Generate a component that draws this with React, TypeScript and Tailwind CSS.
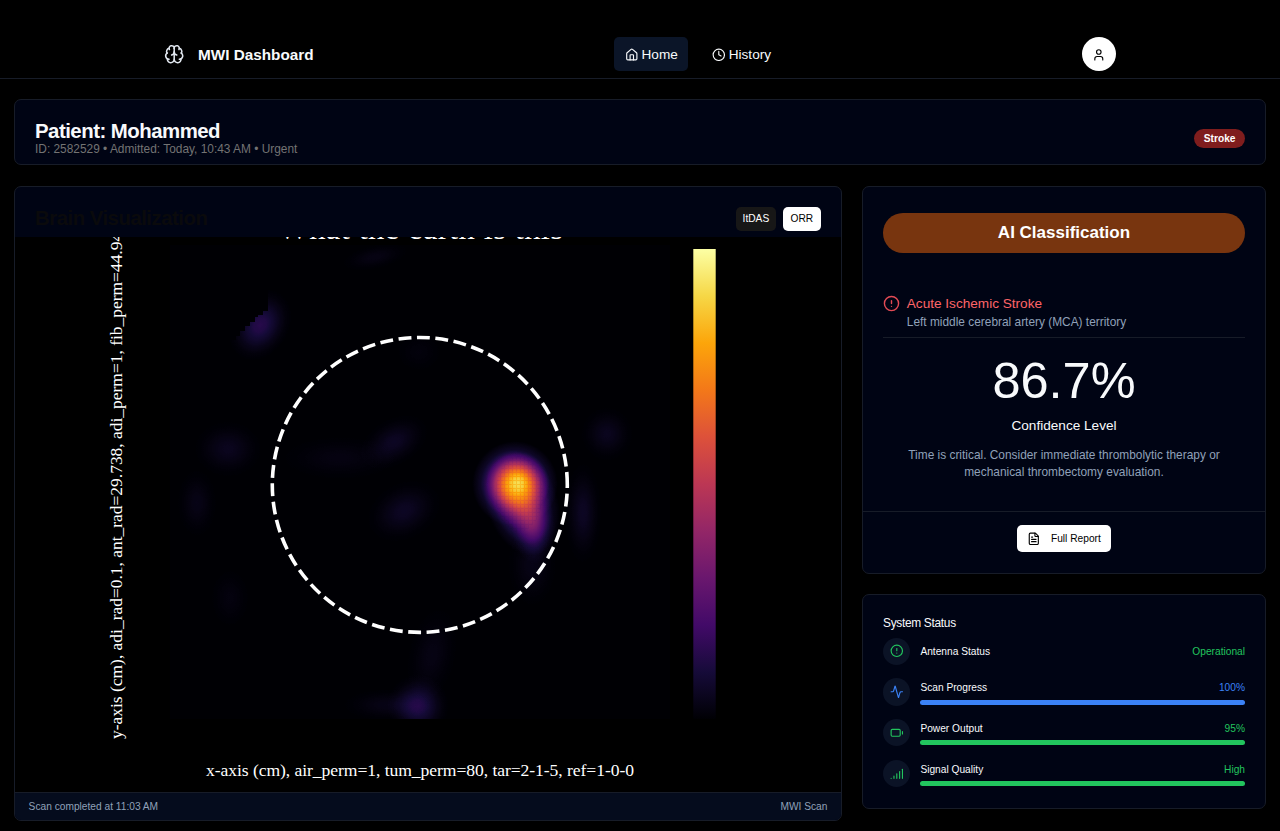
import type { ReactNode } from "react";
import {
  Activity,
  Battery,
  Brain,
  CircleAlert,
  Clock,
  FileText,
  House,
  Signal,
  User,
} from "lucide-react";

const INFERNO = [
  "#000004", "#160b39", "#420a68", "#6a176e", "#932667", "#bc3754",
  "#dd513a", "#f37819", "#fca50a", "#f6d746", "#fcffa4",
];

const channel = (start: number) =>
  INFERNO.map((c) => (parseInt(c.slice(start, start + 2), 16) / 255).toFixed(3)).join(" ");

type Spot = { x: number; y: number; rx: number; ry: number; level: number; turn?: number };

const SPOTS: Spot[] = [
  { x: 260, y: 325, rx: 29, ry: 38, level: 0.14, turn: 32 },
  { x: 375, y: 257, rx: 36, ry: 13, level: 0.03, turn: -12 },
  { x: 394, y: 442, rx: 38, ry: 24, level: 0.06, turn: -30 },
  { x: 340, y: 458, rx: 64, ry: 24, level: 0.025 },
  { x: 404, y: 511, rx: 40, ry: 29, level: 0.06, turn: -28 },
  { x: 228, y: 449, rx: 35, ry: 29, level: 0.05 },
  { x: 607, y: 434, rx: 27, ry: 28, level: 0.05 },
  { x: 583, y: 513, rx: 19, ry: 52, level: 0.06 },
  { x: 197, y: 503, rx: 21, ry: 36, level: 0.035 },
  { x: 230, y: 598, rx: 22, ry: 33, level: 0.02 },
  { x: 419, y: 352, rx: 26, ry: 22, level: 0.015 },
  { x: 432, y: 655, rx: 26, ry: 52, level: 0.03, turn: 12 },
  { x: 418, y: 706, rx: 31, ry: 32, level: 0.13 },
  { x: 388, y: 705, rx: 48, ry: 17, level: 0.035 },
  { x: 532, y: 565, rx: 26, ry: 44, level: 0.035 },
  { x: 515, y: 484, rx: 43, ry: 43, level: 0.64 },
  { x: 518, y: 483, rx: 32, ry: 31, level: 0.56 },
  { x: 518, y: 483, rx: 13, ry: 14, level: 0.36 },
  { x: 522, y: 503, rx: 36, ry: 54, level: 0.44, turn: -18 },
  { x: 533, y: 524, rx: 22, ry: 40, level: 0.2, turn: -4 },
];

function ScanPlot() {
  return (
    <svg viewBox="15 237 826 555" className="block h-[555px] w-full bg-black">
      <defs>
        <radialGradient id="falloff">
          <stop offset="0" stopColor="#fff" stopOpacity="1" />
          <stop offset=".2" stopColor="#fff" stopOpacity=".88" />
          <stop offset=".4" stopColor="#fff" stopOpacity=".6" />
          <stop offset=".6" stopColor="#fff" stopOpacity=".31" />
          <stop offset=".8" stopColor="#fff" stopOpacity=".1" />
          <stop offset="1" stopColor="#fff" stopOpacity="0" />
        </radialGradient>
        <linearGradient id="scale" x1="0" y1="1" x2="0" y2="0">
          {INFERNO.map((c, i) => (
            <stop key={c} offset={i / 10} stopColor={c} />
          ))}
        </linearGradient>
        <filter id="inferno" filterUnits="userSpaceOnUse" x="170" y="245" width="500" height="474" colorInterpolationFilters="sRGB">
          <feComponentTransfer>
            <feFuncR type="table" tableValues={channel(1)} />
            <feFuncG type="table" tableValues={channel(3)} />
            <feFuncB type="table" tableValues={channel(5)} />
          </feComponentTransfer>
        </filter>
        <pattern id="mesh" width="4" height="4" patternUnits="userSpaceOnUse">
          <path d="M0 .5H4M.5 0V4" stroke="#000" strokeWidth="1" opacity=".06" />
        </pattern>
      </defs>
      <g filter="url(#inferno)">
        <rect x="170" y="245" width="500" height="474" fill="#000" />
        {SPOTS.map((s, i) => (
          <ellipse
            key={i}
            cx={s.x}
            cy={s.y}
            rx={s.rx}
            ry={s.ry}
            fill="url(#falloff)"
            opacity={s.level}
            transform={`rotate(${s.turn ?? 0} ${s.x} ${s.y})`}
          />
        ))}
        <ellipse cx="519" cy="494" rx="24" ry="38" fill="url(#mesh)" />
        <path d="M225 280H268V306H268V311H263V315H258V317H255V322H250V326H245V331H240V336H236V340H225Z" fill="#000" />
      </g>
      <path
        d="M567.3 484.9A147.5 147.5 0 0 0 272.3 484.9A147.5 147.5 0 0 0 567.3 484.9"
        fill="none"
        stroke="#fff"
        strokeWidth="3.6"
        strokeDasharray="12.9 5.56"
      />
      <rect x="693.3" y="249" width="22.4" height="470" fill="url(#scale)" />
      <g fill="#fff" fontFamily="'Liberation Serif', serif">
        <text x="278" y="238.6" fontSize="32.6" textLength="285">What the earth is this</text>
        <text x="206" y="776" fontSize="17.6" textLength="428">
          x-axis (cm), air_perm=1, tum_perm=80, tar=2-1-5, ref=1-0-0
        </text>
        <text transform="translate(122 739) rotate(-90)" fontSize="17.45">
          y-axis (cm), adi_rad=0.1, ant_rad=29.738, adi_perm=1, fib_perm=44.94
        </text>
      </g>
    </svg>
  );
}

function StatusRow({ icon, label, value, tone, bar }: {
  icon: ReactNode;
  label: string;
  value: string;
  tone: string;
  bar?: string;
}) {
  return (
    <div className="flex h-[27.2px] items-center gap-[10.2px]">
      <div className={`flex size-[27.2px] shrink-0 items-center justify-center rounded-full bg-[#0b1326] ${tone}`}>
        {icon}
      </div>
      <div className="flex-1">
        <div className="flex justify-between text-[10.2px] leading-[17px]">
          <span className="text-slate-50">{label}</span>
          <span className={tone}>{value}</span>
        </div>
        {bar && <div className={`mt-[3.4px] h-[5.1px] rounded-full ${bar}`} />}
      </div>
    </div>
  );
}

export default function App() {
  return (
    <div className="h-[831px] overflow-hidden bg-black font-['Liberation_Sans',Arial,sans-serif] text-slate-50">
      <header className="h-[79px] border-b border-[#171c28] pt-[30.4px]">
        <div className="mx-auto flex h-12 w-[952px] items-center justify-between">
          <div className="flex items-center gap-[13.6px]">
            <Brain size={20.4} strokeWidth={1.8} className="text-slate-200" />
            <span className="pt-0.5 text-[15.3px] leading-5 font-bold">MWI Dashboard</span>
          </div>
          <nav className="flex gap-[13.6px] text-[13.6px] leading-5">
            <span className="flex h-[34px] items-center gap-[3.4px] rounded-[5px] bg-[#0b1528] px-[10.2px]">
              <House size={13.6} />
              <span className="pt-px">Home</span>
            </span>
            <span className="flex h-[34px] items-center gap-[3.4px] px-[10.2px]">
              <Clock size={13.6} />
              <span className="pt-px">History</span>
            </span>
          </nav>
          <div className="flex size-[34px] items-center justify-center rounded-full bg-white text-black">
            <User size={13.6} />
          </div>
        </div>
      </header>

      <main className="px-3.5 pt-5">
        <section className="flex h-[66px] items-center justify-between rounded-[7px] border border-[#171c28] bg-[#000414] px-5">
          <div className="pt-[15px]">
            <h1 className="text-[20.4px] leading-[20.4px] font-bold tracking-tight">Patient: Mohammed</h1>
            <p className="text-[11.9px] leading-[17px] text-[#737373]">
              ID: 2582529 • Admitted: Today, 10:43 AM • Urgent
            </p>
          </div>
          <span className="mt-[13px] rounded-full bg-[#7f1d1d] px-[9.5px] py-[2.7px] text-[10.2px] leading-[13.6px] font-bold text-white">
            Stroke
          </span>
        </section>

        <div className="mt-[21px] flex items-start gap-5">
          <section className="flex h-[635px] w-[828px] flex-col overflow-hidden rounded-[7px] border border-[#171c28] bg-[#000414]">
            <div className="flex h-[50px] shrink-0 items-center justify-between px-5 pt-[13px]">
              <h2 className="text-[20.4px] leading-[20.4px] font-bold tracking-tight text-[#0a0a0c]">
                Brain Visualization
              </h2>
              <div className="flex gap-[6.8px] text-[10.2px]">
                <button className="h-6 rounded-[5px] bg-[#171717] px-[6.8px] text-white">ItDAS</button>
                <button className="h-6 rounded-[5px] bg-white px-[7.8px] text-black">ORR</button>
              </div>
            </div>
            <ScanPlot />
            <div className="flex flex-1 items-center justify-between border-t border-[#171c28] bg-[#050c1d] px-[13.6px] text-[10.2px] text-slate-400">
              <span>Scan completed at 11:03 AM</span>
              <span>MWI Scan</span>
            </div>
          </section>

          <div className="flex flex-1 flex-col gap-5">
            <section className="flex h-[388px] flex-col rounded-[7px] border border-[#171c28] bg-[#000414]">
              <div className="px-5 pt-[26px]">
                <div className="flex h-[39.5px] items-center justify-center rounded-full bg-[#78350f] text-[17px] font-bold text-white">
                  AI Classification
                </div>
                <div className="mt-[39.5px] flex h-[46px] gap-[6.8px] border-b border-[#171c28]">
                  <CircleAlert size={17} className="mt-[2.5px] shrink-0 text-[#e34b55]" />
                  <div className="pt-[1.6px]">
                    <p className="text-[13.6px] leading-[20.4px] text-red-400">Acute Ischemic Stroke</p>
                    <p className="text-[11.9px] leading-[17px] text-slate-400">
                      Left middle cerebral artery (MCA) territory
                    </p>
                  </div>
                </div>
                <div className="flex flex-col items-center pt-[17px] text-center">
                  <p className="text-[50.5px] leading-[51px]">86.7%</p>
                  <p className="mt-2.5 text-[13.6px] leading-[20.4px]">Confidence Level</p>
                  <p className="mt-[10.2px] w-[330px] text-[11.9px] leading-[17px] text-slate-400">
                    Time is critical. Consider immediate thrombolytic therapy or mechanical thrombectomy evaluation.
                  </p>
                </div>
              </div>
              <div className="mt-auto flex h-[62px] justify-center border-t border-[#171c28] pt-[12.8px]">
                <button className="flex h-[27.2px] items-center gap-[10.2px] rounded-[5px] bg-white px-[10.5px] text-[10.2px] text-black">
                  <FileText size={13.6} />
                  Full Report
                </button>
              </div>
            </section>

            <section className="h-[215px] rounded-[7px] border border-[#171c28] bg-[#000414] px-5 pt-[20.4px]">
              <h3 className="text-[11.9px] leading-[17px] tracking-tight">System Status</h3>
              <div className="mt-[5.2px] flex flex-col gap-[13.6px]">
                <StatusRow icon={<CircleAlert size={13.6} />} label="Antenna Status" value="Operational" tone="text-[#22c55e]" />
                <StatusRow icon={<Activity size={13.6} />} label="Scan Progress" value="100%" tone="text-[#3b82f6]" bar="bg-[#3b82f6]" />
                <StatusRow icon={<Battery size={13.6} />} label="Power Output" value="95%" tone="text-[#22c55e]" bar="bg-[#22c55e]" />
                <StatusRow icon={<Signal size={13.6} />} label="Signal Quality" value="High" tone="text-[#22c55e]" bar="bg-[#22c55e]" />
              </div>
            </section>
          </div>
        </div>
      </main>
    </div>
  );
}
